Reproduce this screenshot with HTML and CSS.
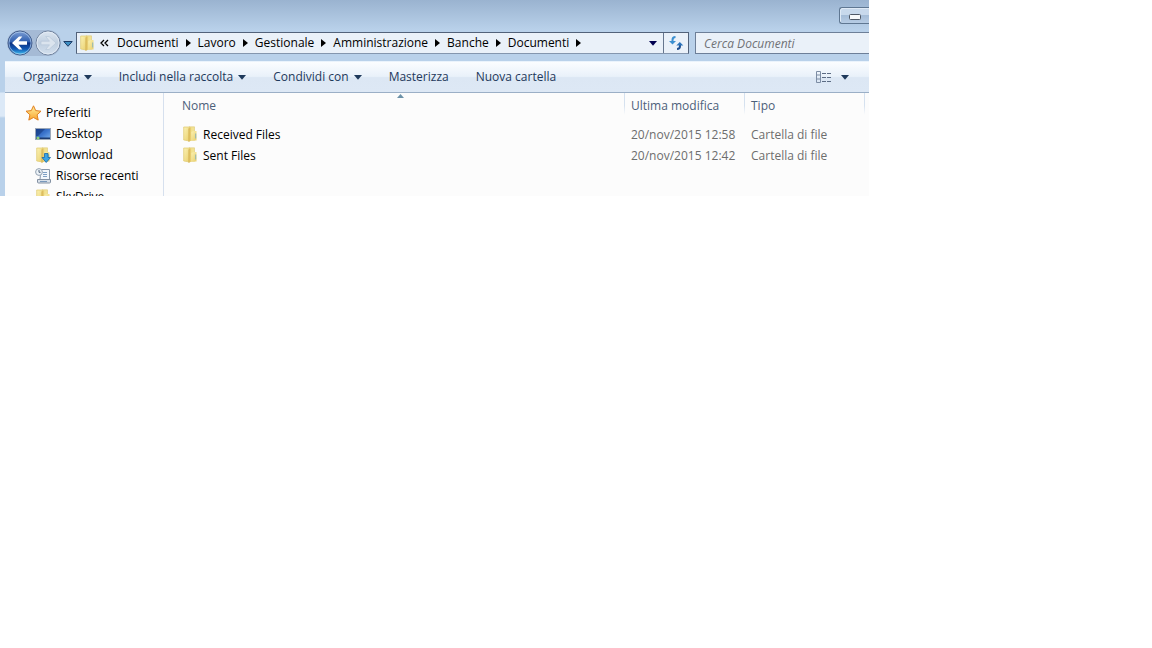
FILE: index.html
```html
<!DOCTYPE html>
<html lang="it">
<head>
<meta charset="UTF-8">
<title>Documenti</title>
<link rel="stylesheet" href="styles.css">
</head>
<body>

<!-- shared icons -->
<svg class="defs" aria-hidden="true">
  <defs>
    <linearGradient id="gold" x1="0" y1="0" x2="1" y2="1">
      <stop offset="0" stop-color="#fbf2b4"/>
      <stop offset="1" stop-color="#e9cf6c"/>
    </linearGradient>
    <linearGradient id="goldDark" x1="0" y1="0" x2="1" y2="0">
      <stop offset="0" stop-color="#d2ae4c"/>
      <stop offset="1" stop-color="#f0d981"/>
    </linearGradient>
    <linearGradient id="orb" x1="0" y1="0" x2="0" y2="1">
      <stop offset="0" stop-color="#7e9fd4"/>
      <stop offset=".45" stop-color="#2f5fb0"/>
      <stop offset=".5" stop-color="#0c3182"/>
      <stop offset=".75" stop-color="#1259b4"/>
      <stop offset="1" stop-color="#42c8f4"/>
    </linearGradient>
    <linearGradient id="orbOff" x1="0" y1="0" x2="0" y2="1">
      <stop offset="0" stop-color="#dde6f0"/>
      <stop offset=".5" stop-color="#c0cfe0"/>
      <stop offset="1" stop-color="#d3e0ee"/>
    </linearGradient>
    <linearGradient id="screen" x1="0" y1="0" x2="1" y2="1">
      <stop offset="0" stop-color="#1d4a9c"/>
      <stop offset=".5" stop-color="#3b74cc"/>
      <stop offset="1" stop-color="#7db4ee"/>
    </linearGradient>
    <linearGradient id="starFill" x1="0" y1="0" x2="0" y2="1">
      <stop offset="0" stop-color="#fff2a0"/>
      <stop offset="1" stop-color="#f9a32c"/>
    </linearGradient>
  </defs>
  <symbol id="folder" viewBox="0 0 16 16">
    <path d="M7 .8h5.500v13.500H7z" fill="#f2e291" stroke="#dcc878" stroke-width=".6"/>
    <path d="M9 6l3-1h2.500v9.500H9z" fill="url(#gold)"/>
    <path d="M13.700 7.500v5" stroke="#8fb6b4" stroke-width="1"/>
    <path d="M1.700 1h6v14l-6-1z" fill="url(#gold)" stroke="#dfc96c" stroke-width=".7"/>
    <path d="M6.500 2.500L9.300 1v13.500L6.500 16z" fill="url(#goldDark)"/>
  </symbol>
  <symbol id="arrow-down" viewBox="0 0 8 5"><path d="M0 0h8L4 4.7z" fill="currentColor"/></symbol>
  <symbol id="arrow-right" viewBox="0 0 5 8"><path d="M0 0l5 4-5 4z" fill="currentColor"/></symbol>
</svg>

<div class="window">
  <div class="titlebar">
    <button type="button" class="minimize" aria-label="Riduci a icona">
      <svg width="12" height="6" viewBox="0 0 12 6"><rect x=".5" y=".5" width="11" height="5" rx="1" fill="#f7f9fb" stroke="#4f5866"/></svg>
    </button>
  </div>

  <div class="address-row">
    <div class="history">
      <button type="button" aria-label="Indietro">
        <svg width="26" height="26" viewBox="0 0 26 26">
          <circle cx="13" cy="13" r="12" fill="url(#orb)" stroke="#455f8d"/>
          <circle cx="13" cy="13" r="11" fill="none" stroke="#b5d0ee" stroke-opacity=".7"/>
          <path d="M5 13l7-6.500h3.300L11.500 11.200H20v3.600h-8.500l3.800 4.700H12z" fill="#fff"/>
        </svg>
      </button>
      <button type="button" aria-label="Avanti" disabled>
        <svg width="26" height="26" viewBox="0 0 26 26">
          <circle cx="13" cy="13" r="12" fill="url(#orbOff)" stroke="#71849f"/>
          <circle cx="13" cy="13" r="11" fill="none" stroke="#e6eef7" stroke-opacity=".8"/>
          <path d="M21 13l-7-6.500h-3.300l3.800 4.700H6v3.600h8.500l-3.800 4.700H14z" fill="#dbe4ee" stroke="#b4c4d6" stroke-width=".6"/>
        </svg>
      </button>
    </div>
    <button type="button" class="recent" aria-label="Pagine recenti">
      <svg width="10" height="6" viewBox="0 0 10 6"><path d="M.8.5h8.4L5 5.3z" fill="#3d8fc4" stroke="#1c3c66"/></svg>
    </button>
    <div class="address">
      <svg width="16" height="16"><use href="#folder"/></svg>
      <button type="button" class="more" aria-label="Livelli superiori">
        <svg width="9" height="8" viewBox="0 0 9 8"><path d="M4 1L1 4l3 3M8 1L5 4l3 3" fill="none" stroke="#000" stroke-width="1.3"/></svg>
      </button>
      <nav class="crumbs">
        <a href="#">Documenti</a><svg width="5" height="8"><use href="#arrow-right"/></svg>
        <a href="#">Lavoro</a><svg width="5" height="8"><use href="#arrow-right"/></svg>
        <a href="#">Gestionale</a><svg width="5" height="8"><use href="#arrow-right"/></svg>
        <a href="#">Amministrazione</a><svg width="5" height="8"><use href="#arrow-right"/></svg>
        <a href="#">Banche</a><svg width="5" height="8"><use href="#arrow-right"/></svg>
        <a href="#">Documenti</a><svg width="5" height="8"><use href="#arrow-right"/></svg>
      </nav>
      <button type="button" class="drop" aria-label="Percorsi precedenti"><svg width="8" height="5"><use href="#arrow-down"/></svg></button>
      <button type="button" class="refresh" aria-label="Aggiorna">
        <svg width="16" height="14" viewBox="0 0 16 14">
          <path d="M7.500 1C5.300 1 4.500 2.200 4.500 4v2" fill="none" stroke="#3b8fd0" stroke-width="2"/>
          <path d="M1 5h7L4.500 8.500z" fill="#3b8fd0"/>
          <path d="M9 13c2.200 0 3-1.200 3-3V9" fill="none" stroke="#1f4f90" stroke-width="2"/>
          <path d="M8.300 9.500L11.800 6l3.500 3.500z" fill="#2b73ba"/>
        </svg>
      </button>
    </div>
    <input type="search" class="search" placeholder="Cerca Documenti" aria-label="Cerca Documenti">
  </div>

  <div class="client">
    <div class="toolbar">
      <button type="button">Organizza <svg width="8" height="5"><use href="#arrow-down"/></svg></button>
      <button type="button">Includi nella raccolta <svg width="8" height="5"><use href="#arrow-down"/></svg></button>
      <button type="button">Condividi con <svg width="8" height="5"><use href="#arrow-down"/></svg></button>
      <button type="button">Masterizza</button>
      <button type="button">Nuova cartella</button>
      <button type="button" class="view" aria-label="Cambia visualizzazione">
        <svg width="16" height="12" viewBox="0 0 16 12" fill="none" stroke="#7d8da4">
          <path d="M.5.500h4v11h-4zM.5 4h4M.5 8h4"/>
          <path d="M6 2.500h4M11 2.500h4M6 6.500h4M11 6.500h4M6 10.500h4M11 10.500h4" stroke="#5c6c84"/>
        </svg>
        <svg width="8" height="5"><use href="#arrow-down"/></svg>
      </button>
    </div>

    <div class="panes">
      <nav class="sidebar">
        <a href="#" class="group">
          <svg width="17" height="16" viewBox="0 0 17 16"><path d="M8.500.8l2.200 4.800 5.300.6-3.900 3.600 1.100 5.300-4.700-2.600-4.700 2.600 1.100-5.300L1 6.200l5.300-.6z" fill="url(#starFill)" stroke="#e07f1f" stroke-linejoin="round"/></svg>
          Preferiti
        </a>
        <a href="#">
          <svg width="16" height="16" viewBox="0 0 16 16">
            <rect x=".5" y="2.500" width="15" height="11" fill="url(#screen)" stroke="#9aa7b8"/>
            <path d="M1 11.500h14V13H1z" fill="#1c3b70"/>
            <path d="M1 3h9L3 10H1z" fill="#16397f" opacity=".6"/>
            <circle cx="3" cy="12" r="1.600" fill="#8fd07a"/>
          </svg>
          Desktop
        </a>
        <a href="#">
          <svg width="16" height="16" viewBox="0 0 16 16">
            <use href="#folder" width="16" height="16"/>
            <path d="M9.500 6.500h3.500v4h2.500L11.200 15.500 7 10.500h2.500z" fill="#3aa4e6" stroke="#1767a8" stroke-width=".8"/>
          </svg>
          Download
        </a>
        <a href="#">
          <svg width="16" height="16" viewBox="0 0 16 16">
            <path d="M6 1.500h8.500v10H5z" fill="#f3f7fb" stroke="#8998aa"/>
            <path d="M8 4.500h4M8 6.500h4M8 8.500h4" stroke="#7fa0c4"/>
            <path d="M2.500 11.500h13v2.500q0 1-1 1h-11q-1 0-1-1z" fill="#d8e0e9" stroke="#8391a3"/>
            <path d="M5 13.500h7" stroke="#7898bb"/>
            <circle cx="4" cy="4" r="3.400" fill="#edf3f8" stroke="#94a2b2"/>
            <path d="M4 2v2.300h1.600" fill="none" stroke="#53677f"/>
          </svg>
          Risorse recenti
        </a>
        <a href="#"><svg width="16" height="16"><use href="#folder"/></svg> SkyDrive</a>
      </nav>

      <div class="files">
        <svg class="sort" width="7" height="4" viewBox="0 0 7 4"><path d="M0 4l3.500-4L7 4z" fill="#6c91a8"/></svg>
        <table>
          <thead>
            <tr><th class="name">Nome</th><th class="date">Ultima modifica</th><th class="type">Tipo</th><th></th></tr>
          </thead>
          <tbody>
            <tr><td class="name"><svg width="16" height="16"><use href="#folder"/></svg>Received Files</td><td>20/nov/2015 12:58</td><td>Cartella di file</td><td></td></tr>
            <tr><td class="name"><svg width="16" height="16"><use href="#folder"/></svg>Sent Files</td><td>20/nov/2015 12:42</td><td>Cartella di file</td><td></td></tr>
          </tbody>
        </table>
      </div>
    </div>
  </div>
</div>

</body>
</html>
```
FILE: styles.css
```css
* {
  box-sizing: border-box;
}
body {
  margin: 0;
  background: #fff;
  font: 12px/20px "Segoe UI", "Open Sans", sans-serif;
  color: #000;
}
a {
  color: inherit;
  text-decoration: none;
}
button {
  padding: 0;
  border: 0;
  background: none;
  font: inherit;
  color: inherit;
}
svg {
  display: block;
  flex: none;
}
.defs {
  position: absolute;
  width: 0;
  height: 0;
}
.window {
  max-width: 869px;
  overflow: hidden;
  background: linear-gradient(#9ab3d0, #b9d1ea 30px, #b9d1ea 92px, #dce9f7 93px, #dce9f7 116px, #b9d1ea 118px);
}

/* title bar */
.titlebar {
  display: flex;
  justify-content: flex-end;
  height: 30px;
  padding-top: 7px;
}
.minimize {
  display: flex;
  justify-content: center;
  align-items: center;
  width: 30px;
  height: 17px;
  padding-top: 3px;
  border: 1px solid #5f7792;
  border-right: 0;
  border-radius: 3px 0 0 3px;
  background: linear-gradient(#c8d9ec 50%, #a5bdd8 50%, #b7cce4);
  box-shadow: inset 1px 1px #dfeaf6;
}

/* address bar */
.address-row {
  display: flex;
  align-items: center;
  height: 26px;
  margin-right: -8px;
  padding-left: 7px;
}
.history {
  display: flex;
  gap: 2px;
  border-radius: 13px;
  background: #a5bad5;
}
.recent {
  padding: 2px 3px 0 2px;
}
.address {
  display: flex;
  flex: 1;
  align-items: center;
  height: 22px;
  padding-left: 2px;
  border: 1px solid #52627a;
  border-bottom-color: #8496ae;
  background: #eaf1f9;
}
.more {
  padding: 0 8px 0 5px;
}
.crumbs {
  display: flex;
  flex: 1;
  gap: 7px;
  align-items: center;
}
.drop {
  padding: 1px 6px 0;
  color: #000050;
}
.refresh {
  height: 20px;
  padding: 0 4px;
  border-left: 1px solid #66768e;
}
.search {
  width: 182px;
  height: 22px;
  margin-left: 6px;
  padding: 0 8px;
  border: 1px solid #6d7f98;
  border-radius: 0;
  background: #eaf1f9;
  font: inherit;
}
.search::placeholder {
  color: #707276;
  font-style: italic;
}

/* toolbar */
.client {
  margin: 5px 0 0 5px;
}
.toolbar {
  display: flex;
  align-items: center;
  gap: 27px;
  height: 32px;
  padding: 0 20px 0 18px;
  border-top: 1px solid #eaf3fc;
  border-bottom: 1px solid #9bafc6;
  background: linear-gradient(#fbfdff, #e9f1fa 48%, #dce7f4 52%, #dde8f5);
  color: #1e395b;
}
.toolbar button {
  display: flex;
  align-items: center;
  gap: 5px;
}
.toolbar .view {
  gap: 9px;
  margin-left: auto;
}

/* panes */
.panes {
  display: flex;
  background: #fcfcfc;
}
.sidebar {
  width: 159px;
  height: 103px;
  padding: 9px 0 0 30px;
  border-right: 1px solid #d6e0ee;
  overflow: hidden;
}
.sidebar a {
  display: flex;
  align-items: center;
  gap: 5px;
  height: 21px;
}
.sidebar .group {
  gap: 4px;
  margin-left: -10px;
}
.files {
  position: relative;
  flex: 1;
}
/* sort marker over the first column header */
.sort {
  position: absolute;
  top: 1px;
  left: 233px;
}
table {
  width: 100%;
  table-layout: fixed;
  border-collapse: collapse;
}
th, td {
  height: 21px;
  padding: 0 0 0 7px;
  text-align: left;
  font-weight: normal;
  white-space: nowrap;
}
th {
  height: 31px;
  padding-bottom: 6px;
  background: linear-gradient(#d5e1ef 40%, #fcfcfc 70%) 0 0 / 1px 100% no-repeat;
  color: #4c607a;
}
td {
  color: #6d6d6d;
}
th.name {
  padding-left: 18px;
  background: none;
}
.date, .type {
  width: 120px;
}
th:last-child {
  width: 5px;
  padding: 0;
}
td.name {
  padding-left: 18px;
  color: #000;
}
td.name svg {
  display: inline-block;
  margin-right: 5px;
  vertical-align: -3px;
}
```
